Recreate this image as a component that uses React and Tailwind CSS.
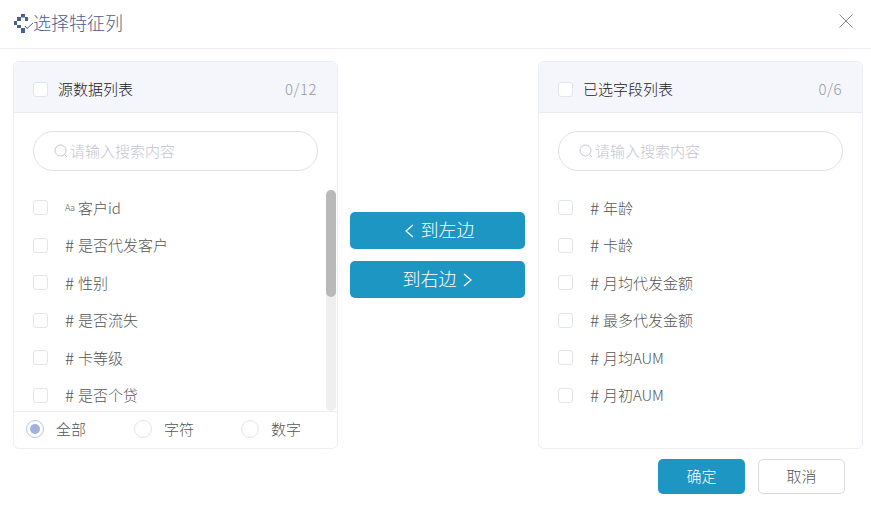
import React from "react";

const font = { fontFamily: '"Noto Sans CJK SC", "Liberation Sans", sans-serif' };

function Checkbox() {
  return <span className="block w-[15px] h-[15px] shrink-0 rounded-[3px] border border-[#e3e5ee] bg-white" />;
}

function SearchIcon() {
  return (
    <svg width="14" height="14" viewBox="0 0 14 14" fill="none" stroke="#c4c7d0" strokeWidth="1" className="shrink-0">
      <circle cx="6.5" cy="6.5" r="5.5" />
      <path d="M10.5 10.5L13 13" />
    </svg>
  );
}

function Search() {
  return (
    <div className="h-10 flex items-center gap-[2px] pl-5 rounded-[20px] border border-[#dfe1e9] bg-white">
      <SearchIcon />
      <span className="text-[15px] text-[#c3c6ce] font-light leading-none pb-[2px]">请输入搜索内容</span>
    </div>
  );
}

function Row({ kind = "#", label }) {
  return (
    <div className="h-[37.5px] shrink-0 flex items-center">
      <Checkbox />
      <span className="ml-[17px] flex items-center text-[15px] font-light text-[#555] leading-none whitespace-nowrap pb-[1px]">
        {kind === "#" ? (
          <span className="w-[13px] text-[17px]">#</span>
        ) : (
          <span className="w-[13px] text-[9px] tracking-[-0.5px]">Aa</span>
        )}
        {label}
      </span>
    </div>
  );
}

function PanelHead({ title, count }) {
  return (
    <div className="h-[51px] shrink-0 flex items-center pl-[19px] pr-[20px] bg-[#f4f6fb] border-b border-[#e9ebf2] rounded-t-[6px]">
      <div className="flex items-center w-full pt-[5px]">
        <Checkbox />
        <span className="ml-[10px] text-[15px] font-light text-[#222] leading-none pb-[2px]">{title}</span>
        <span className="ml-auto text-[15px] text-[#999] font-light leading-none tracking-[0.5px] pb-[2px]">{count}</span>
      </div>
    </div>
  );
}

function Radio({ label, on, className }) {
  return (
    <div className={`flex items-center ${className}`}>
      <span className={`w-[18px] h-[18px] rounded-full border flex items-center justify-center ${on ? "border-[#b9c5e6]" : "border-[#e3e5ee]"}`}>
        {on && <span className="w-[10px] h-[10px] rounded-full bg-[#a2b1db]" />}
      </span>
      <span className="ml-[12px] text-[15px] font-light text-[#555] leading-none pb-[2px]">{label}</span>
    </div>
  );
}

export default function App() {
  const left = [
    ["A", "客户id"],
    ["#", "是否代发客户"],
    ["#", "性别"],
    ["#", "是否流失"],
    ["#", "卡等级"],
    ["#", "是否个贷"],
  ];
  const right = ["年龄", "卡龄", "月均代发金额", "最多代发金额", "月均AUM", "月初AUM"];
  return (
    <div className="w-[871px] h-[516px] bg-white overflow-hidden" style={font}>
      <header className="h-[49px] flex items-center pl-[14px] pr-[17px] pb-[2px] border-b border-[#eceef4]">
        <svg width="19" height="19" viewBox="0 0 19 19" className="shrink-0" fill="#46608f">
          <rect x="7" y="0" width="4" height="3.5" />
          <rect x="3" y="3" width="4" height="4" />
          <rect x="11" y="3" width="3" height="4" />
          <rect x="0" y="7" width="3" height="4" />
          <rect x="3" y="11" width="4" height="3" />
          <rect x="7" y="14" width="4" height="5" />
          <path d="M11 12L13 14.5L19 9" fill="none" stroke="#46608f" strokeWidth="1" />
        </svg>
        <h1 className="text-[18px] font-light text-[#46608f] leading-none pb-[3px]">选择特征列</h1>
        <svg width="16" height="16" viewBox="0 0 16 16" className="ml-auto mb-[4px]" fill="none" stroke="#8a8a8a" strokeWidth="1">
          <path d="M1.5 1.5L14.5 14.5M14.5 1.5L1.5 14.5" />
        </svg>
      </header>

      <main className="flex pl-[13px] pr-[8px] pt-[12px]">
        <section className="w-[325px] h-[388px] flex flex-col rounded-[6px] border border-[#eceef4]">
          <PanelHead title="源数据列表" count="0/12" />
          <div className="px-[19px] py-[18px] shrink-0">
            <Search />
          </div>
          <div className="relative flex-1 min-h-0 overflow-hidden pl-[19px] border-b border-[#eceef4]">
            <div className="flex flex-col h-full overflow-hidden">
              {left.map(([k, l]) => (
                <Row key={l} kind={k} label={l} />
              ))}
            </div>
            <div className="absolute right-[1px] top-[1px] bottom-0 w-[10px] rounded-[5px] bg-[#efefef]">
              <div className="h-[107px] rounded-[5px] bg-[#b9b9b9]" />
            </div>
          </div>
          <div className="h-[36px] shrink-0 flex items-center pl-[12px] pb-[2px]">
            <Radio label="全部" on className="w-[108px]" />
            <Radio label="字符" className="w-[107px]" />
            <Radio label="数字" />
          </div>
        </section>

        <div className="w-[200px] flex flex-col items-center pt-[151px] gap-[12px] pr-[1px]">
          <button className="w-[175px] h-[37px] pl-[3px] rounded-[5px] bg-[#1e96c3] text-white text-[18px] font-light leading-none flex items-center justify-center">
            <svg width="10" height="16" viewBox="0 0 10 16" fill="none" stroke="#fff" strokeWidth="1.2" className="mr-[7px]">
              <path d="M9 2L2 8L9 14" />
            </svg>
            <span className="pb-[3px]">到左边</span>
          </button>
          <button className="w-[175px] h-[37px] rounded-[5px] bg-[#1e96c3] text-white text-[18px] font-light leading-none flex items-center justify-center">
            <span className="pb-[3px]">到右边</span>
            <svg width="10" height="16" viewBox="0 0 10 16" fill="none" stroke="#fff" strokeWidth="1.2" className="ml-[6px]">
              <path d="M1 2L8 8L1 14" />
            </svg>
          </button>
        </div>

        <section className="w-[325px] h-[388px] flex flex-col rounded-[6px] border border-[#eceef4]">
          <PanelHead title="已选字段列表" count="0/6" />
          <div className="px-[19px] py-[18px] shrink-0">
            <Search />
          </div>
          <div className="flex flex-col pl-[19px]">
            {right.map((l) => (
              <Row key={l} label={l} />
            ))}
          </div>
        </section>
      </main>

      <footer className="flex justify-end gap-[13px] pt-[10px] pr-[26px]">
        <button className="w-[87px] h-[35px] rounded-[5px] bg-[#1e96c3] text-white text-[15px] font-light leading-none pb-[2px]">确定</button>
        <button className="w-[87px] h-[35px] rounded-[5px] border border-[#d9d9d9] bg-white text-[#555] text-[15px] font-light leading-none pb-[2px]">取消</button>
      </footer>
    </div>
  );
}
